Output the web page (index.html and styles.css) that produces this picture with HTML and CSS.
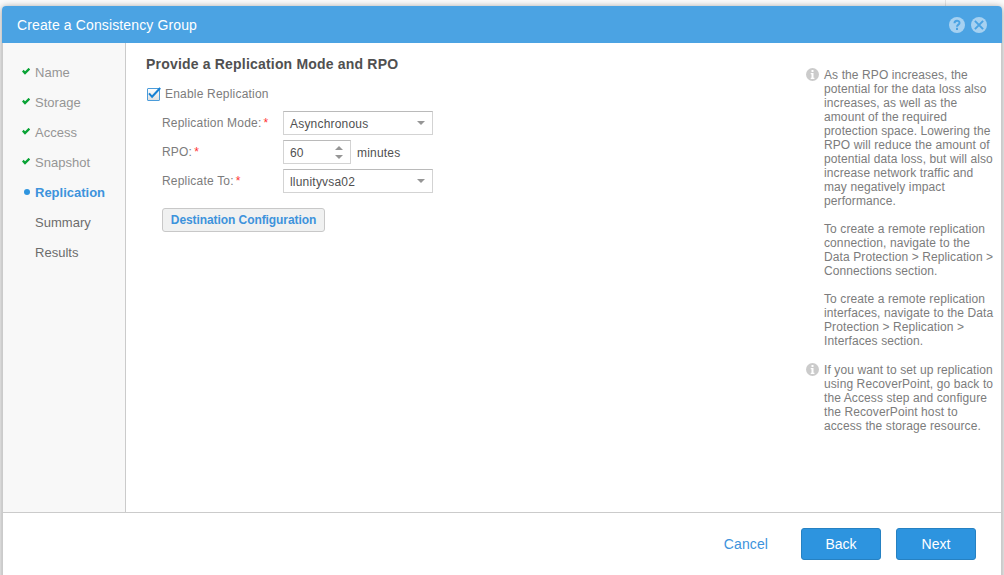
FILE: index.html
```html
<!DOCTYPE html>
<html lang="en">
<head>
    <meta charset="UTF-8">
    <meta name="viewport" content="width=device-width, initial-scale=1.0">
    <title>Create a Consistency Group</title>

    <link rel="stylesheet" href="styles.css">
</head>

<body>

    <div class="dialog">
        <!-- Title Bar -->
        <header class="titlebar">
            <h1>Create a Consistency Group</h1>
            <div class="tools">
                <svg width="16" height="16" viewBox="0 0 16 16">
                    <circle cx="8" cy="8" r="8" fill="#a6d1f1"/>
                    <path d="M5.5 6.2C5.5 2.9 10.5 3 10.5 5.9C10.5 7.7 8 7.6 8 9.8" fill="none" stroke="#4ba3e3" stroke-width="2"/>
                    <rect x="7" y="10.8" width="2" height="2.2" fill="#4ba3e3"/>
                </svg>
                <svg width="16" height="16" viewBox="0 0 16 16">
                    <circle cx="8" cy="8" r="8" fill="#a6d1f1"/>
                    <path d="M3.9 3.9L12.1 12.1M12.1 3.9L3.9 12.1" stroke="#4ba3e3" stroke-width="2"/>
                </svg>
            </div>
        </header>

        <div class="content">
            <!-- Wizard Steps -->
            <ul class="steps">
                <li class="done"><svg class="tick" width="8" height="7" viewBox="0 0 8 7"><path d="M.8 2.7L3 5L7.4 .7" fill="none" stroke="#0aa336" stroke-width="2.4"/></svg><span>Name</span></li>
                <li class="done"><svg class="tick" width="8" height="7" viewBox="0 0 8 7"><path d="M.8 2.7L3 5L7.4 .7" fill="none" stroke="#0aa336" stroke-width="2.4"/></svg><span>Storage</span></li>
                <li class="done"><svg class="tick" width="8" height="7" viewBox="0 0 8 7"><path d="M.8 2.7L3 5L7.4 .7" fill="none" stroke="#0aa336" stroke-width="2.4"/></svg><span>Access</span></li>
                <li class="done"><svg class="tick" width="8" height="7" viewBox="0 0 8 7"><path d="M.8 2.7L3 5L7.4 .7" fill="none" stroke="#0aa336" stroke-width="2.4"/></svg><span>Snapshot</span></li>
                <li class="current"><i class="dot"></i><span>Replication</span></li>
                <li><span>Summary</span></li>
                <li><span>Results</span></li>
            </ul>

            <!-- Form -->
            <main class="form">
                <h2>Provide a Replication Mode and RPO</h2>

                <div class="check">
                    <svg width="14" height="14" viewBox="0 0 14 14">
                        <defs>
                            <linearGradient id="box" x1="0" y1="0" x2="0" y2="1">
                                <stop offset="0" stop-color="#ffffff"/>
                                <stop offset="1" stop-color="#dedede"/>
                            </linearGradient>
                        </defs>
                        <rect x=".5" y="1.5" width="12" height="12" rx=".5" fill="url(#box)" stroke="#4b9cda"/>
                        <path d="M2 6.3L5.1 9.8L13.2 1" fill="none" stroke="#1780d3" stroke-width="2"/>
                    </svg>
                    <span>Enable Replication</span>
                </div>

                <div class="row">
                    <label>Replication Mode: <b>*</b></label>
                    <div class="field select"><span>Asynchronous</span><i class="down"></i></div>
                </div>
                <div class="row">
                    <label>RPO: <b>*</b></label>
                    <div class="field spinner"><span>60</span><div class="arrows"><i class="up"></i><i class="down"></i></div></div>
                    <span class="unit">minutes</span>
                </div>
                <div class="row">
                    <label>Replicate To: <b>*</b></label>
                    <div class="field select"><span>llunityvsa02</span><i class="down"></i></div>
                </div>

                <button class="config">Destination Configuration</button>
            </main>

            <!-- Help -->
            <aside class="help">
                <div class="note">
                    <svg width="13" height="13" viewBox="0 0 13 13">
                        <circle cx="6.5" cy="6.5" r="6.5" fill="#cbcbcb"/>
                        <path d="M5.5 2H7.5V4H5.5ZM4.7 5H7.5V9.7H8.4V11H4.7V9.7H5.5V6.3H4.7Z" fill="#fff"/>
                    </svg>
                    <div>
                        <p>As the RPO increases, the<br>potential for the data loss also<br>increases, as well as the<br>amount of the required<br>protection space. Lowering the<br>RPO will reduce the amount of<br>potential data loss, but will also<br>increase network traffic and<br>may negatively impact<br>performance.</p>
                        <p>To create a remote replication<br>connection, navigate to the<br>Data Protection &gt; Replication &gt;<br>Connections section.</p>
                        <p>To create a remote replication<br>interfaces, navigate to the Data<br>Protection &gt; Replication &gt;<br>Interfaces section.</p>
                    </div>
                </div>
                <div class="note">
                    <svg width="13" height="13" viewBox="0 0 13 13">
                        <circle cx="6.5" cy="6.5" r="6.5" fill="#cbcbcb"/>
                        <path d="M5.5 2H7.5V4H5.5ZM4.7 5H7.5V9.7H8.4V11H4.7V9.7H5.5V6.3H4.7Z" fill="#fff"/>
                    </svg>
                    <div>
                        <p>If you want to set up replication<br>using RecoverPoint, go back to<br>the Access step and configure<br>the RecoverPoint host to<br>access the storage resource.</p>
                    </div>
                </div>
            </aside>
        </div>

        <!-- Buttons -->
        <footer class="footer">
            <a class="cancel">Cancel</a>
            <button class="primary">Back</button>
            <button class="primary">Next</button>
        </footer>
    </div>

</body>
</html>
```
FILE: styles.css
```css
/* ===== General Styling ===== */
* {
    box-sizing: border-box;
}

body {
    margin: 0;
    padding: 6px 2px 0;
    height: 575px;
    overflow: hidden;
    font-family: "Liberation Sans", Arial, sans-serif;
    font-size: 12px;
    color: #7c7c7c;
    background: linear-gradient(90deg, transparent 945px, #e4e4e4 945px, #e4e4e4 946px, transparent 946px) no-repeat, #fbfbfb;
}

h1, h2, p, ul {
    margin: 0;
    padding: 0;
}

button {
    font-family: inherit;
}

/* ===== Dialog ===== */
.dialog {
    height: 590px;
    display: flex;
    flex-direction: column;
    border-radius: 4px 4px 0 0;
    background: #fff;
    box-shadow: 0 1px 7px rgba(0, 0, 0, 0.4);
}

.titlebar {
    height: 37px;
    padding: 0 15px;
    display: flex;
    align-items: center;
    justify-content: space-between;
    border-radius: 4px 4px 0 0;
    background: #4ba3e3;
}

.titlebar h1 {
    padding-top: 1px;
    font-size: 14px;
    font-weight: normal;
    letter-spacing: 0.13px;
    color: #fff;
}

.tools {
    display: flex;
    gap: 6px;
}

.tools svg {
    display: block;
}

.content {
    height: 470px;
    display: flex;
    border: solid #cbcbcb;
    border-width: 0 1px 1px;
}

/* ===== Steps ===== */
.steps {
    width: 123px;
    padding: 15px 0 0 19px;
    list-style: none;
    background: #f8f8f8;
    border-right: 1px solid #cbcbcb;
    font-size: 13px;
    letter-spacing: 0.02px;
    color: #6c6c6c;
}

.steps li {
    height: 30px;
    padding-left: 13px;
    line-height: 30px;
}

.steps .done {
    padding-left: 0;
    color: #959595;
}

.steps .current {
    padding-left: 2px;
    font-weight: bold;
    letter-spacing: 0;
    color: #3d93dc;
}

.tick {
    margin-right: 5px;
    vertical-align: 2px;
}

.dot {
    display: inline-block;
    width: 6px;
    height: 6px;
    margin-right: 5px;
    border-radius: 50%;
    background: #2f95df;
    vertical-align: 2px;
}

/* ===== Form ===== */
.form {
    flex: 1;
    padding: 13px 0 0 20px;
}

.form h2 {
    height: 16px;
    line-height: 16px;
    font-size: 14px;
    letter-spacing: 0.19px;
    color: #505050;
}

.check {
    display: flex;
    gap: 4px;
    margin: 15px 0 9px 1px;
    height: 15px;
    line-height: 15px;
    letter-spacing: 0.2px;
}

.row {
    display: flex;
    height: 24px;
    margin: 0 0 5px 16px;
    letter-spacing: 0.2px;
}

.row label {
    width: 121px;
    line-height: 24px;
}

.row b {
    margin-left: -1.5px;
    font-weight: normal;
    color: #f33;
}

.field {
    display: flex;
    align-items: center;
    justify-content: space-between;
    padding: 2px 6px 0;
    border: 1px solid #d3d3d3;
    border-top-color: #bababa;
    color: #505050;
}

.select {
    width: 150px;
    padding-right: 7px;
}

.spinner {
    width: 68px;
    padding-right: 7px;
}

.arrows {
    display: flex;
    flex-direction: column;
    gap: 5px;
    padding-bottom: 2px;
}

.up, .down {
    border: 4.5px solid transparent;
    border-top: 4.5px solid #969696;
    border-bottom: 0;
}

.up {
    border-top: 0;
    border-bottom: 4.5px solid #969696;
}

.select .down {
    margin-bottom: 2px;
}

.unit {
    margin-left: 6px;
    line-height: 26px;
    color: #505050;
}

.config {
    width: 163px;
    height: 24px;
    margin: 10px 0 0 16px;
    padding: 0;
    border: 1px solid #c8c8c8;
    border-radius: 3px;
    background: #f0f1f1;
    color: #3d93dc;
    font-size: 12px;
    font-weight: bold;
    letter-spacing: -0.08px;
}

/* ===== Help ===== */
.help {
    width: 195px;
    padding-top: 25px;
    line-height: 14px;
    letter-spacing: 0.1px;
    white-space: nowrap;
}

.note {
    display: flex;
    gap: 5px;
    margin-bottom: 15px;
}

.note p + p {
    margin-top: 14px;
}

/* ===== Footer ===== */
.footer {
    flex: 1;
    display: flex;
    justify-content: flex-end;
    padding: 15px 25px 0;
    border: solid #cbcbcb;
    border-width: 0 1px;
    font-size: 14px;
}

.cancel {
    margin-right: 33px;
    line-height: 32px;
    letter-spacing: 0.1px;
    color: #3d93dc;
}

.primary {
    width: 80px;
    height: 32px;
    margin-left: 15px;
    border: 1px solid #2681c2;
    border-radius: 3px;
    background: #2d94df;
    color: #fff;
    font-size: 14px;
}

.cancel + .primary {
    margin-left: 0;
}
```
